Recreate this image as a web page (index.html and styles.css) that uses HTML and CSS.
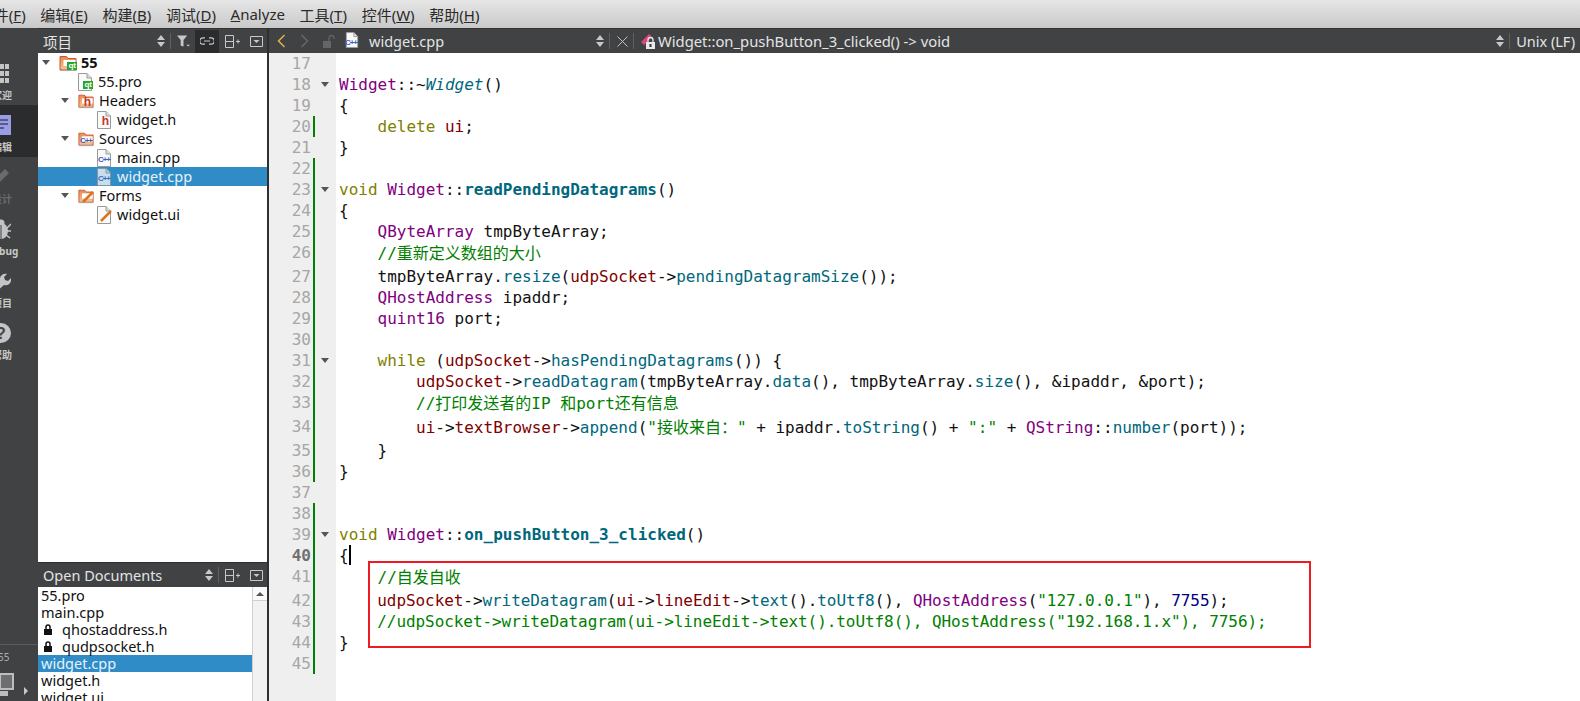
FILE: index.html
```html
<html>

<head>
  <meta charset="utf-8">
  <link rel="stylesheet" href="styles.css">
</head>

<body>
  <svg class="defs" width="0" height="0">
    <linearGradient id="folderfill" x1="0" y1="0" x2="0" y2="1">
      <stop offset="0" stop-color="#e98a52" />
      <stop offset="1" stop-color="#f8c49a" />
    </linearGradient>
    <symbol id="folder" viewBox="0 0 18 18">
      <path d="M1 2.500h6.500l1.500 2h8v11.500h-16z" fill="url(#folderfill)" stroke="#c9572c" />
      <path d="M4.500 6h12v6h-12z" fill="#fff" />
      <path d="M1 16.500h16.500" stroke="#a9a9a9" />
    </symbol>
    <symbol id="doc" viewBox="0 0 16 18">
      <path d="M1.500 .5h8.500l4.500 4.500v12.500h-13z" fill="#fafafa" stroke="#9a9a9a" />
      <path d="M10 .5v4.500h4.500" fill="#ddd" stroke="#9a9a9a" />
    </symbol>
    <symbol id="updown" viewBox="0 0 8 12">
      <path d="M4 0l4 5h-8zM4 12l-4-5h8z" fill="#c8c8c8" />
    </symbol>
    <symbol id="split" viewBox="0 0 15 13">
      <path d="M.5 .5h8v12h-8zM.5 6.500h8M11 6.500h4M13 4.500v4" fill="none" stroke="#c8c8c8" />
    </symbol>
    <symbol id="closebar" viewBox="0 0 13 11">
      <path d="M.5 .5h12v10h-12z" fill="none" stroke="#c8c8c8" />
      <path d="M3.500 4h6l-3 3z" fill="#c8c8c8" />
    </symbol>
  </svg>

  <div class="menubar">
    <span class="menu first">文件(<u>F</u>)</span>
    <span class="menu">编辑(<u>E</u>)</span>
    <span class="menu">构建(<u>B</u>)</span>
    <span class="menu">调试(<u>D</u>)</span>
    <span class="menu"><u>A</u>nalyze</span>
    <span class="menu">工具(<u>T</u>)</span>
    <span class="menu">控件(<u>W</u>)</span>
    <span class="menu">帮助(<u>H</u>)</span>
  </div>

  <div class="main">
    <div class="modebar">
      <div class="modes">
        <div class="mode">
          <svg class="mode_icon" viewBox="0 0 16 20">
            <path d="M0 1h4v5h-4zM6 1h5v5h-5zM12 1h4v5h-4zM0 8h4v5h-4zM6 8h5v5h-5zM12 8h4v5h-4zM0 15h4v5h-4zM6 15h5v5h-5zM12 15h4v5h-4z" fill="#c4c4c4" />
          </svg>
          <span>欢迎</span>
        </div>
        <div class="mode active">
          <svg class="mode_icon" viewBox="0 0 20 20">
            <path d="M0 0h20v20h-20z" fill="#9a9ce6" />
            <path d="M3 5h14M3 9h14M3 13h10" stroke="#44466e" stroke-width="1.500" />
          </svg>
          <span>编辑</span>
        </div>
        <div class="mode dim">
          <svg class="mode_icon" viewBox="0 0 20 20">
            <path d="M2 18l2-6 10-10 4 4-10 10z" fill="#6a6b6d" />
          </svg>
          <span>设计</span>
        </div>
        <div class="mode">
          <svg class="mode_icon" viewBox="0 0 20 20">
            <ellipse cx="10" cy="12" rx="7" ry="8" fill="#c4c4c4" />
            <circle cx="10" cy="4" r="3.500" fill="#c4c4c4" />
            <path d="M0 5l4 4M20 5l-4 4M0 12h4M20 12h-4M1 19l4-3M19 19l-4-3" stroke="#c4c4c4" stroke-width="1.500" />
            <path d="M10 6v14" stroke="#404244" />
          </svg>
          <span>Debug</span>
        </div>
        <div class="mode">
          <svg class="mode_icon" viewBox="0 0 20 20">
            <path d="M1 18l8-8c-1-4 2-8 7-7l-3 3 1 3 3 1 3-3c1 5-3 8-7 7l-8 7z" fill="#c4c4c4" />
          </svg>
          <span>项目</span>
        </div>
        <div class="mode">
          <svg class="mode_icon" viewBox="0 0 20 20">
            <circle cx="10" cy="10" r="10" fill="#c4c4c4" />
            <text x="10" y="16" class="help_mark">?</text>
          </svg>
          <span>帮助</span>
        </div>
      </div>
      <div class="kit">
        <div class="kit_name">55</div>
        <div class="kit_row">
          <svg class="kit_icon" width="14" height="24" viewBox="0 0 14 24">
            <path d="M0 1h13v15h-13z" fill="#6d6e70" stroke="#bdbdbd" stroke-width="2" />
            <path d="M0 18h8v5h-8z" fill="#bdbdbd" />
          </svg>
          <span class="kit_arrow"></span>
        </div>
      </div>
    </div>

    <div class="sidepanel">
      <div class="bar">
        <span class="bar_title">项目</span>
        <svg class="ud" width="8" height="12"><use href="#updown" /></svg>
        <span class="sep"></span>
        <svg class="filter" width="13" height="13" viewBox="0 0 14 13">
          <path d="M0 0h11l-4 5v7l-3-1v-6z" fill="#c8c8c8" />
          <path d="M10 10h4l-2 2z" fill="#c8c8c8" />
        </svg>
        <span class="linkbtn">
          <svg width="14" height="8" viewBox="0 0 14 8">
            <path d="M5 .8h-2a3.200 3.200 0 0 0 0 6.400h2M9 .8h2a3.200 3.200 0 0 1 0 6.400h-2M4 4h6" fill="none" stroke="#c8c8c8" stroke-width="1.200" />
          </svg>
        </span>
        <svg class="ic_split" width="15" height="13"><use href="#split" /></svg>
        <svg class="ic_close" width="13" height="11"><use href="#closebar" /></svg>
      </div>
      <div class="tree">
        <div class="row lv0"><i class="arrow"></i>
          <span class="ticon big"><svg width="18" height="18"><use href="#folder" /></svg><b class="badge qt">qt</b></span>
          <strong>55</strong>
        </div>
        <div class="row lv1"><i class="arrow none"></i>
          <span class="ticon"><svg width="16" height="18"><use href="#doc" /></svg><b class="badge qt">qt</b></span>55.pro
        </div>
        <div class="row lv1"><i class="arrow"></i>
          <span class="ticon"><svg width="16" height="18"><use href="#folder" /></svg><b class="badge hh">h</b></span>Headers
        </div>
        <div class="row lv2"><i class="arrow none"></i>
          <span class="ticon"><svg width="16" height="18"><use href="#doc" /></svg><b class="badge hh">h</b></span>widget.h
        </div>
        <div class="row lv1"><i class="arrow"></i>
          <span class="ticon"><svg width="16" height="18"><use href="#folder" /></svg><b class="badge cpp">C++</b></span>Sources
        </div>
        <div class="row lv2"><i class="arrow none"></i>
          <span class="ticon"><svg width="16" height="18"><use href="#doc" /></svg><b class="badge cpp">C++</b></span>main.cpp
        </div>
        <div class="row lv2 selected"><i class="arrow none"></i>
          <span class="ticon"><svg width="16" height="18"><use href="#doc" /></svg><b class="badge cpp">C++</b></span>widget.cpp
        </div>
        <div class="row lv1"><i class="arrow"></i>
          <span class="ticon"><svg width="16" height="18"><use href="#folder" /></svg>
            <svg class="pen" width="12" height="12" viewBox="0 0 12 12"><path d="M1 11l10-10" stroke="#d9741f" stroke-width="2.500" /></svg></span>Forms
        </div>
        <div class="row lv2"><i class="arrow none"></i>
          <span class="ticon"><svg width="16" height="18"><use href="#doc" /></svg>
            <svg class="pen" width="12" height="12" viewBox="0 0 12 12"><path d="M1 11l10-10" stroke="#d9741f" stroke-width="2.500" /></svg></span>widget.ui
        </div>
      </div>
      <div class="docs">
        <div class="bar">
          <span class="bar_title">Open Documents</span>
          <svg class="ud" width="8" height="12"><use href="#updown" /></svg>
          <span class="sep"></span>
          <svg class="ic_split docs_split" width="15" height="13"><use href="#split" /></svg>
          <svg class="ic_close" width="13" height="11"><use href="#closebar" /></svg>
        </div>
        <div class="docs_body">
          <div class="docs_list">
            <div class="doc">55.pro</div>
            <div class="doc">main.cpp</div>
            <div class="doc locked"><svg class="lock" width="10" height="11" viewBox="0 0 10 11"><path d="M1 5h8v6h-8z" fill="#111" /><path d="M3 5v-2a2 2 0 0 1 4 0v2" fill="none" stroke="#111" stroke-width="1.500" /></svg>qhostaddress.h</div>
            <div class="doc locked"><svg class="lock" width="10" height="11" viewBox="0 0 10 11"><path d="M1 5h8v6h-8z" fill="#111" /><path d="M3 5v-2a2 2 0 0 1 4 0v2" fill="none" stroke="#111" stroke-width="1.500" /></svg>qudpsocket.h</div>
            <div class="doc selected">widget.cpp</div>
            <div class="doc">widget.h</div>
            <div class="doc">widget.ui</div>
          </div>
          <div class="scroll"><div class="scroll_btn"><span></span></div></div>
        </div>
      </div>
    </div>

    <div class="editor">
      <div class="bar editbar">
        <svg class="nav back" width="9" height="14" viewBox="0 0 9 14"><path d="M7.500 1l-6 6 6 6" fill="none" stroke="#e3b341" stroke-width="1.500" /></svg>
        <svg class="nav fwd" width="9" height="14" viewBox="0 0 9 14"><path d="M1.500 1l6 6-6 6" fill="none" stroke="#66686a" stroke-width="1.500" /></svg>
        <svg class="nav unlock" width="12" height="13" viewBox="0 0 12 13"><path d="M0 6h8v7h-8z" fill="#636567" /><path d="M6 6v-3a2.500 2.500 0 0 1 5 0v1" fill="none" stroke="#636567" stroke-width="1.300" /></svg>
        <span class="ticon file_icon"><svg width="14" height="16"><use href="#doc" /></svg><b class="badge cpp">C++</b></span>
        <span class="file_name">widget.cpp</span>
        <svg class="ud" width="8" height="12"><use href="#updown" /></svg>
        <span class="sep"></span>
        <svg class="x_icon" width="11" height="11" viewBox="0 0 11 11"><path d="M.5 .5l10 10M10.500 .5l-10 10" stroke="#c0c0c0" /></svg>
        <span class="sep"></span>
        <svg class="sym_icon" width="15" height="15" viewBox="0 0 15 15">
          <path d="M0 8l8-8 3 3-8 8z" fill="#d8487a" />
          <path d="M5 8h9v7h-9z" fill="#e8e8e8" />
          <path d="M7 8v-2a2.500 2.500 0 0 1 5 0v2" fill="none" stroke="#e8e8e8" stroke-width="1.300" />
          <path d="M8.500 10h2v3h-2z" fill="#333" />
        </svg>
        <span class="sym_name">Widget::on_pushButton_3_clicked() -&gt; void</span>
        <svg class="ud" width="8" height="12"><use href="#updown" /></svg>
        <span class="sep"></span>
        <span class="eol">Unix (LF)</span>
      </div>

      <div class="code">
        <div class="ln"><span class="no">17</span><span class="mark"></span><span class="fold"></span><span class="src"></span></div>
        <div class="ln"><span class="no">18</span><span class="mark"></span><span class="fold on"></span><span class="src"><span class="t">Widget</span>::~<em class="f">Widget</em>()</span></div>
        <div class="ln"><span class="no">19</span><span class="mark"></span><span class="fold"></span><span class="src">{</span></div>
        <div class="ln"><span class="no">20</span><span class="mark ch"></span><span class="fold"></span><span class="src">    <span class="k">delete</span> <span class="m">ui</span>;</span></div>
        <div class="ln"><span class="no">21</span><span class="mark"></span><span class="fold"></span><span class="src">}</span></div>
        <div class="ln"><span class="no">22</span><span class="mark ch"></span><span class="fold"></span><span class="src"></span></div>
        <div class="ln"><span class="no">23</span><span class="mark ch"></span><span class="fold on"></span><span class="src"><span class="k">void</span> <span class="t">Widget</span>::<b class="f">readPendingDatagrams</b>()</span></div>
        <div class="ln"><span class="no">24</span><span class="mark ch"></span><span class="fold"></span><span class="src">{</span></div>
        <div class="ln"><span class="no">25</span><span class="mark ch"></span><span class="fold"></span><span class="src">    <span class="t">QByteArray</span> tmpByteArray;</span></div>
        <div class="ln tall"><span class="no">26</span><span class="mark ch"></span><span class="fold"></span><span class="src">    <span class="c">//重新定义数组的大小</span></span></div>
        <div class="ln"><span class="no">27</span><span class="mark ch"></span><span class="fold"></span><span class="src">    tmpByteArray.<span class="f">resize</span>(<span class="m">udpSocket</span>-&gt;<span class="f">pendingDatagramSize</span>());</span></div>
        <div class="ln"><span class="no">28</span><span class="mark ch"></span><span class="fold"></span><span class="src">    <span class="t">QHostAddress</span> ipaddr;</span></div>
        <div class="ln"><span class="no">29</span><span class="mark ch"></span><span class="fold"></span><span class="src">    <span class="t">quint16</span> port;</span></div>
        <div class="ln"><span class="no">30</span><span class="mark ch"></span><span class="fold"></span><span class="src"></span></div>
        <div class="ln"><span class="no">31</span><span class="mark ch"></span><span class="fold on"></span><span class="src">    <span class="k">while</span> (<span class="m">udpSocket</span>-&gt;<span class="f">hasPendingDatagrams</span>()) {</span></div>
        <div class="ln"><span class="no">32</span><span class="mark ch"></span><span class="fold"></span><span class="src">        <span class="m">udpSocket</span>-&gt;<span class="f">readDatagram</span>(tmpByteArray.<span class="f">data</span>(), tmpByteArray.<span class="f">size</span>(), &amp;ipaddr, &amp;port);</span></div>
        <div class="ln tall"><span class="no">33</span><span class="mark ch"></span><span class="fold"></span><span class="src">        <span class="c">//打印发送者的IP 和port还有信息</span></span></div>
        <div class="ln tall"><span class="no">34</span><span class="mark ch"></span><span class="fold"></span><span class="src">        <span class="m">ui</span>-&gt;<span class="m">textBrowser</span>-&gt;<span class="f">append</span>(<span class="c">"接收来自："</span> + ipaddr.<span class="f">toString</span>() + <span class="c">":"</span> + <span class="t">QString</span>::<span class="f">number</span>(port));</span></div>
        <div class="ln"><span class="no">35</span><span class="mark ch"></span><span class="fold"></span><span class="src">    }</span></div>
        <div class="ln"><span class="no">36</span><span class="mark ch"></span><span class="fold"></span><span class="src">}</span></div>
        <div class="ln"><span class="no">37</span><span class="mark"></span><span class="fold"></span><span class="src"></span></div>
        <div class="ln"><span class="no">38</span><span class="mark ch"></span><span class="fold"></span><span class="src"></span></div>
        <div class="ln"><span class="no">39</span><span class="mark ch"></span><span class="fold on"></span><span class="src"><span class="k">void</span> <span class="t">Widget</span>::<b class="f">on_pushButton_3_clicked</b>()</span></div>
        <div class="ln cur"><span class="no">40</span><span class="mark ch"></span><span class="fold"></span><span class="src">{<span class="caret"></span></span></div>
        <div class="ln tall"><span class="no">41</span><span class="mark ch"></span><span class="fold"></span><span class="src">    <span class="c">//自发自收</span></span></div>
        <div class="ln tight"><span class="no">42</span><span class="mark ch"></span><span class="fold"></span><span class="src">    <span class="m">udpSocket</span>-&gt;<span class="f">writeDatagram</span>(<span class="m">ui</span>-&gt;<span class="m">lineEdit</span>-&gt;<span class="f">text</span>().<span class="f">toUtf8</span>(), <span class="t">QHostAddress</span>(<span class="c">"127.0.0.1"</span>), <span class="n">7755</span>);</span></div>
        <div class="ln tight"><span class="no">43</span><span class="mark ch"></span><span class="fold"></span><span class="src">    <span class="c">//udpSocket-&gt;writeDatagram(ui-&gt;lineEdit-&gt;text().toUtf8(), QHostAddress("192.168.1.x"), 7756);</span></span></div>
        <div class="ln"><span class="no">44</span><span class="mark ch"></span><span class="fold"></span><span class="src">}</span></div>
        <div class="ln"><span class="no">45</span><span class="mark ch"></span><span class="fold"></span><span class="src"></span></div>
        <div class="redbox"></div>
      </div>
    </div>
  </div>
</body>

</html>
```

FILE: styles.css
```css
body {
  margin: 0;
  width: 1580px;
  height: 701px;
  overflow: hidden;
  font-family: "Noto Sans", "Noto Sans CJK SC", sans-serif;
  font-size: 14.500px;
  color: #111;
  background: #fff;
}

.defs {
  display: block;
  height: 0;
}

.menubar {
  display: flex;
  height: 28px;
  overflow: hidden;
  align-items: center;
  background: linear-gradient(#e6e6e6, #c9c9c9);
  color: #2a2a2a;
  white-space: nowrap;
  box-sizing: border-box;
}

.menu {
  padding: 0 7.350px;
  font-size: 15px;
}

.menu.first {
  margin-left: -28.500px;
}

.main {
  display: flex;
  height: 673px;
}

.modebar {
  width: 38px;
  flex: none;
  background: #404244;
  overflow: hidden;
  display: flex;
  flex-direction: column;
  justify-content: space-between;
}

.modes {
  margin-top: 25px;
  width: 66px;
  margin-left: -28px;
}

.mode {
  height: 52px;
  box-sizing: border-box;
  padding: 10px 6px 0 0;
  display: flex;
  flex-direction: column;
  align-items: center;
  color: #c8c8c8;
  font-size: 10px;
  font-weight: bold;
  line-height: 14px;
}

.mode.active {
  background: #2b2c2e;
}

.mode.dim {
  color: #6a6b6d;
}

.mode_icon {
  width: 20px;
  height: 20px;
  margin: 0 3px 5px 0;
}

.help_mark {
  font: bold 16px "Liberation Sans", sans-serif;
  text-anchor: middle;
  fill: #404244;
}

.kit {
  height: 57px;
  border-top: 1px solid #5a5c5e;
  box-sizing: border-box;
  color: #b0b0b0;
  font-size: 10px;
}

.kit_name {
  margin-top: 5px;
  margin-left: -2px;
  line-height: 14px;
}

.kit_row {
  display: flex;
  align-items: center;
  margin-top: 9px;
}

.kit_arrow {
  margin-left: 10px;
  margin-top: 12px;
  border-left: 4px solid #c8c8c8;
  border-top: 4px solid transparent;
  border-bottom: 4px solid transparent;
}

.sidepanel {
  width: 229px;
  flex: none;
  display: flex;
  flex-direction: column;
  border-right: 2px solid #2e2f30;
}

.bar {
  height: 25px;
  flex: none;
  display: flex;
  align-items: center;
  background: #404244;
  color: #e4e4e4;
  font-size: 14.500px;
  white-space: nowrap;
  border-top: 1px solid #333;
  box-sizing: border-box;
}

.bar_title {
  flex: 1;
  padding-left: 5px;
}

.sep {
  width: 1px;
  height: 16px;
  background: #5f6163;
  margin: 0 6px 0 5px;
}

.ud {
  flex: none;
}

.filter {
  margin-right: 5px;
}

.linkbtn {
  width: 24px;
  height: 23px;
  background: #2b2c2e;
  display: flex;
  align-items: center;
  justify-content: center;
}

.ic_split {
  margin-left: 6px;
}

.ic_close {
  margin-left: 10px;
  margin-right: 4px;
}

.docs_split {
  margin-left: 0;
}

.tree {
  flex: 1;
  background: #fff;
  overflow: hidden;
}

.row {
  display: flex;
  align-items: center;
  height: 19px;
  line-height: 19px;
  white-space: nowrap;
}

.lv0 {
  padding-left: 1px;
}

.lv1 {
  padding-left: 20px;
}

.lv2 {
  padding-left: 39px;
}

.row.selected,
.doc.selected {
  background: #308cc6;
  color: #e6f2fa;
}

.row.selected .ticon {
  opacity: 0.75;
}

.arrow {
  width: 14px;
  height: 5px;
  margin-right: 6px;
  flex: none;
  background: #555;
  clip-path: polygon(22% 0, 78% 0, 50% 100%);
}

.arrow.none {
  background: none;
  margin-right: 5px;
}

.ticon {
  position: relative;
  display: flex;
  width: 16px;
  height: 18px;
  margin-right: 5px;
  flex: none;
}

.ticon.big {
  width: 18px;
  margin-right: 4px;
}

.badge {
  position: absolute;
  right: 0;
  bottom: 2px;
  font: bold 8px/8px "Liberation Sans", sans-serif;
  padding: 0 1px;
}

.badge.qt {
  color: #fff;
  background: #27a52a;
}

.badge.hh {
  color: #c0392b;
  font-size: 12px;
  line-height: 10px;
  right: 2px;
  bottom: 3px;
}

.badge.cpp {
  color: #3f5fc0;
  font-size: 8px;
  letter-spacing: -1px;
  right: 1px;
  bottom: 3px;
}

.pen {
  position: absolute;
  right: 0;
  bottom: 2px;
}

.docs {
  height: 139px;
  flex: none;
  display: flex;
  flex-direction: column;
}

.docs .bar {
  border-top: 1px solid #2e2f30;
}

.docs_body {
  flex: 1;
  display: flex;
  overflow: hidden;
  background: #fff;
}

.docs_list {
  flex: 1;
  overflow: hidden;
}

.doc {
  height: 17px;
  line-height: 17px;
  padding-left: 3px;
  white-space: nowrap;
}

.doc.locked {
  display: flex;
  align-items: center;
}

.lock {
  margin: 0 9px 0 2px;
}

.scroll {
  width: 14px;
  background: #f2f2f2;
  border-left: 1px solid #cfcfcf;
}

.scroll_btn {
  height: 13px;
  background: #fafafa;
  border-bottom: 1px solid #cfcfcf;
  display: flex;
  align-items: center;
  justify-content: center;
}

.scroll_btn span {
  border-bottom: 4px solid #555;
  border-left: 4px solid transparent;
  border-right: 4px solid transparent;
}

.editor {
  flex: 1;
  min-width: 0;
  display: flex;
  flex-direction: column;
}

.nav {
  flex: none;
}

.back {
  margin-left: 8px;
}

.fwd {
  margin-left: 14px;
}

.unlock {
  margin-left: 14px;
}

.file_icon {
  margin-left: 10px;
  width: 14px;
  margin-right: 10px;
}

.file_name {
  width: 227px;
  flex: none;
}

.x_icon {
  margin: 0 0 0 1px;
}

.sym_icon {
  flex: none;
  margin-right: 2px;
  margin-left: 1px;
}

.sym_name {
  flex: 1;
  font-size: 14.800px;
}

.eol {
  margin-right: 5px;
}

.code {
  position: relative;
  flex: 1;
  overflow: hidden;
  font-family: "DejaVu Sans Mono", "Noto Sans CJK SC", monospace;
  font-size: 16px;
  color: #111;
  background: linear-gradient(90deg, #efefef 67px, #fff 67px);
}

.ln {
  display: flex;
  height: 21px;
  line-height: 21px;
}

.ln.tall {
  height: 24px;
}

.ln.tight .src {
  letter-spacing: -0.070px;
}

.no {
  width: 42px;
  flex: none;
  text-align: right;
  color: #a6a6a6;
}

.cur .no {
  font-weight: bold;
  color: #707070;
}

.mark {
  width: 2px;
  margin-left: 2px;
  flex: none;
}

.mark.ch {
  background: #008000;
}

.fold {
  width: 21px;
  flex: none;
  position: relative;
}

.fold.on::after {
  content: "";
  position: absolute;
  left: 6px;
  top: 8px;
  border-top: 5px solid #555;
  border-left: 4px solid transparent;
  border-right: 4px solid transparent;
}

.src {
  padding-left: 3px;
  white-space: pre;
}

.tall .src {
  line-height: 24px;
}

.k {
  color: #808000;
}

.t {
  color: #800080;
}

.m {
  color: #800000;
}

.f {
  color: #00677c;
}

.c {
  color: #008000;
}

.n {
  color: #000080;
}

.caret {
  display: inline-block;
  width: 2px;
  height: 20px;
  background: #000;
  vertical-align: top;
}

.redbox {
  position: absolute;
  left: 99px;
  top: 508px;
  width: 939px;
  height: 83px;
  border: 2px solid #ed1c24;
  pointer-events: none;
}
```
